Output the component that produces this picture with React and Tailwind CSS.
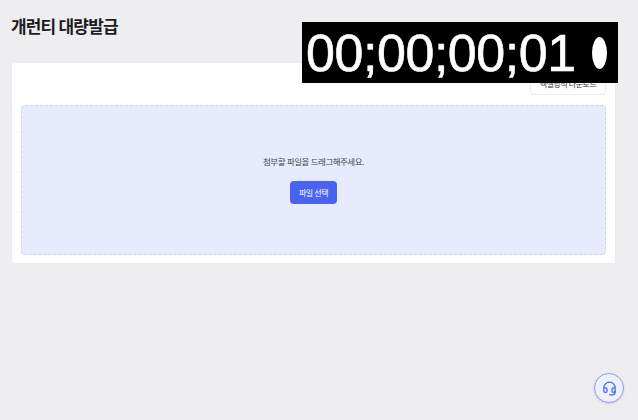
import { Headset } from 'lucide-react';

const App = () => {
  return (
    <div className="relative h-[420px] w-[638px] overflow-hidden bg-[#eeeef0] font-['Inter','Noto_Sans_CJK_KR',sans-serif]">
      <div className="px-[11px] pt-[15px]">
        <h1 className="h-[24px] text-[17px] font-bold leading-[24px] tracking-[-0.85px] text-[#1c1c1e]">개런티 대량발급</h1>

        <div className="mt-[23px] w-[605px] rounded-[4px] border border-[#ebebef] bg-white px-[9px] pt-[9px] pb-[8px]">
          <div className="flex justify-end">
            <button className="flex h-[23px] w-[76px] items-center justify-center rounded-[4px] border border-[#ececf0] bg-white text-[8px] tracking-[-0.5px] text-[#333]">
              엑셀양식 다운로드
            </button>
          </div>

          <div className="mt-[10px] flex h-[150px] flex-col items-center rounded-[4px] border border-dashed border-[#d2d2e4] bg-[#e8ebfc]">
            <p className="mt-[49px] text-[8.5px] leading-[14px] tracking-[-0.5px] text-[#44464f]">첨부할 파일을 드래그해주세요.</p>
            <button className="mt-[12px] h-[23px] w-[47px] rounded-[4px] bg-[#4863f0] text-[8px] tracking-[-0.5px] text-white">파일 선택</button>
          </div>
        </div>
      </div>

      {/* timecode overlay */}
      <div className="absolute left-[302px] top-[22px] flex h-[61px] w-[316px] items-center bg-black pl-[4px] font-['Liberation_Sans',sans-serif] text-[52px] leading-none text-white">
        <span className="whitespace-nowrap tracking-[-0.45px] [-webkit-text-stroke:0.6px_white]">00;00;00;01</span>
        <span className="ml-[16px] h-[32px] w-[15px] shrink-0 rounded-[50%] bg-white" />
      </div>

      <button className="absolute left-[594px] top-[373px] flex h-[30px] w-[30px] items-center justify-center rounded-full border border-[#8f9ff0] bg-[#eef0fb] shadow-sm">
        <Headset className="h-[15px] w-[15px] text-[#4863f0]" strokeWidth={2} />
      </button>
    </div>
  );
};

export default App;
